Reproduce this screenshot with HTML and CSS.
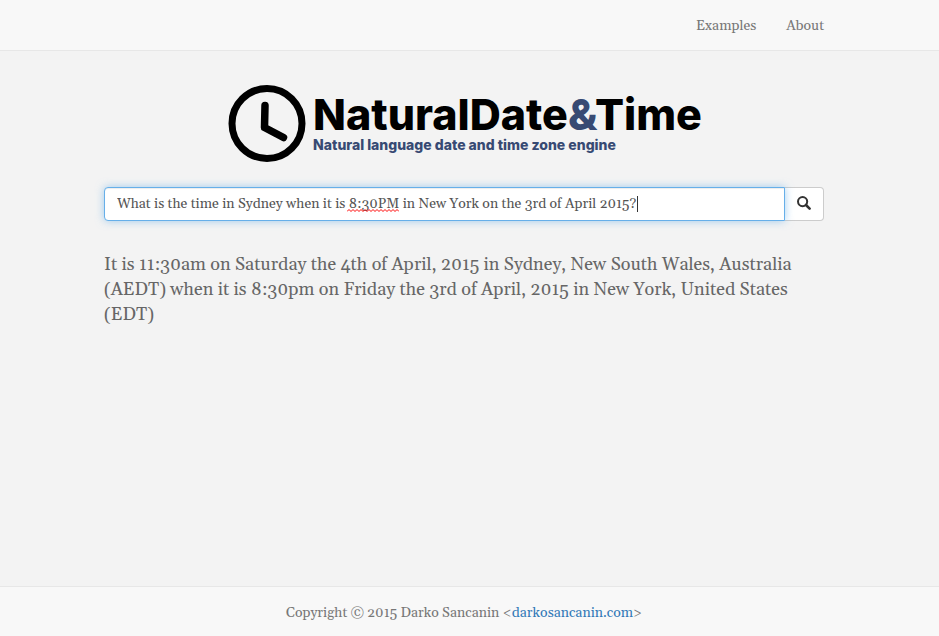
FILE: index.html
```html
<!DOCTYPE html>
<html lang="en">
<head>
<meta charset="utf-8">
<title>NaturalDate&amp;Time</title>
<link rel="stylesheet" href="styles.css">
</head>
<body>
<header class="topbar">
  <nav class="container nav">
    <a href="#examples">Examples</a>
    <a href="#about">About</a>
  </nav>
</header>
<main class="container main">
  <div class="brand">
    <svg class="clock" viewBox="0 0 78 78" aria-hidden="true">
      <circle cx="39" cy="38.500" r="35" fill="none" stroke="#000" stroke-width="7"/>
      <path d="M37 20.500L36.500 42.500L55.500 52.500" fill="none" stroke="#000" stroke-width="7.500" stroke-linecap="round" stroke-linejoin="round"/>
    </svg>
    <div>
      <h1 class="title">NaturalDate<span class="amp">&amp;</span>Time</h1>
      <p class="tagline">Natural language date and time zone engine</p>
    </div>
  </div>
  <form class="search">
    <div class="field">
      <input class="query" type="text" aria-label="Question" spellcheck="false" value="What is the time in Sydney when it is 8:30PM in New York on the 3rd of April 2015?">
      <svg class="squiggle" viewBox="0 0 52 3" aria-hidden="true">
        <path d="M0 2.500L2 .5L4 2.500L6 .5L8 2.500L10 .5L12 2.500L14 .5L16 2.500L18 .5L20 2.500L22 .5L24 2.500L26 .5L28 2.500L30 .5L32 2.500L34 .5L36 2.500L38 .5L40 2.500L42 .5L44 2.500L46 .5L48 2.500L50 .5L52 2.500" fill="none" stroke="#f00"/>
      </svg>
      <span class="caret"></span>
    </div>
    <button class="go" type="submit" aria-label="Search">
      <svg class="lens" viewBox="0 0 14 14" aria-hidden="true">
        <circle cx="5.600" cy="5.600" r="4.600" fill="none" stroke="#333" stroke-width="2"/>
        <path d="M9 9L12.600 12.600" stroke="#333" stroke-width="2.600" stroke-linecap="round"/>
      </svg>
    </button>
  </form>
  <p class="answer">It is 11:30am on Saturday the 4th of April, 2015 in Sydney, New South Wales, Australia (AEDT) when it is 8:30pm on Friday the 3rd of April, 2015 in New York, United States (EDT)</p>
</main>
<footer class="footer">
  <p class="container copy">Copyright © 2015 Darko Sancanin &lt;<a href="#author">darkosancanin.com</a>&gt;</p>
</footer>
</body>
</html>
```
FILE: styles.css
```css
* { box-sizing: border-box; }
body {
  margin: 0;
  min-height: 100vh;
  display: flex;
  flex-direction: column;
  background: #f3f3f3;
  color: #666;
  font: 14px/20px Georgia, Gelasio, "Liberation Serif", serif;
}
h1, p { margin: 0; }
.topbar, .footer { background: #f8f8f8; padding-right: 11px; }
.topbar { border-bottom: 1px solid #e7e7e7; }
.footer { border-top: 1px solid #e7e7e7; }
.container { width: 100%; max-width: 720px; margin: 0 auto; }
.nav { display: flex; justify-content: flex-end; gap: 30px; padding: 16px 0 14px; }
.nav a { color: #777; text-decoration: none; }
.main { flex: 1; }
main.container { box-sizing: content-box; padding-right: 11px; }
.brand { display: flex; justify-content: center; gap: 7px; padding: 34px 0 24px 2px; }
.clock { width: 78px; height: 78px; }
.title {
  margin-top: 8px;
  font: 800 43px/42px Inter, "Liberation Sans", sans-serif;
  color: #000;
}
.amp { color: #374a73; }
.tagline {
  font: 800 14px/20px Inter, "Liberation Sans", sans-serif;
  color: #374a73;
}
.search { display: flex; }
.field { position: relative; flex: 1; z-index: 1; }
.query {
  display: block;
  width: 100%;
  height: 34px;
  padding: 6px 12px;
  border: 1px solid #66afe9;
  border-radius: 4px 0 0 4px;
  outline: 0;
  background: #fff;
  color: #555;
  font: inherit;
  box-shadow: inset 0 1px 1px rgba(0, 0, 0, .075), 0 0 8px rgba(102, 175, 233, .6);
}
.squiggle { position: absolute; left: 243px; top: 22px; width: 52px; height: 3px; }
.caret { position: absolute; left: 533px; top: 9px; width: 1px; height: 16px; background: #333; }
.go {
  width: 39px;
  height: 34px;
  padding: 0 0 2px;
  border: 1px solid #ccc;
  border-left: 0;
  border-radius: 0 4px 4px 0;
  background: #fff;
}
.lens { display: block; width: 14px; height: 14px; margin: 0 auto; }
.answer { margin-top: 31px; font-size: 18px; line-height: 25px; }
.copy { padding: 16px 0 13px; text-align: center; color: #777; }
.copy a { color: #337ab7; text-decoration: none; }
```
